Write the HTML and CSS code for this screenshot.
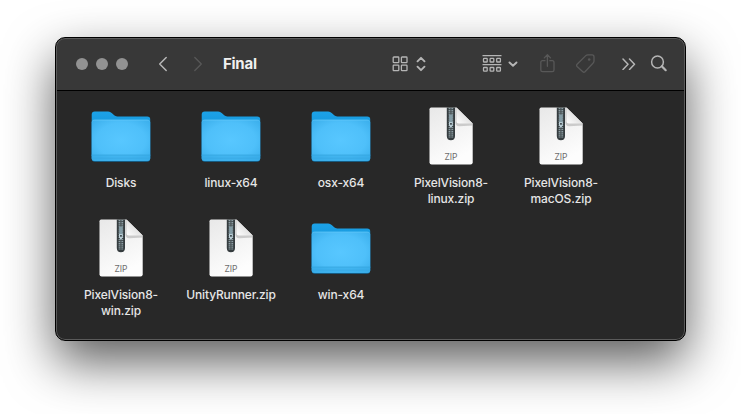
FILE: index.html
```html
<!DOCTYPE html>
<html lang="en">
<head>
<meta charset="utf-8">
<title>Final</title>
<link rel="stylesheet" href="styles.css">
</head>
<body>
<svg class="defs" width="0" height="0" aria-hidden="true">
  <defs>
    <linearGradient id="folderBack" x1="0" y1="0" x2="0" y2="1">
      <stop offset="0" stop-color="#1ca2e8"/><stop offset="1" stop-color="#0f85c4"/>
    </linearGradient>
    <radialGradient id="folderFront" cx=".5" cy=".5" r=".7">
      <stop offset="0" stop-color="#58c7ff"/><stop offset=".6" stop-color="#4fc0fa"/><stop offset="1" stop-color="#39adea"/>
    </radialGradient>
    <linearGradient id="paper" x1="0" y1="0" x2=".4" y2="1">
      <stop offset="0" stop-color="#e8e8e8"/><stop offset="1" stop-color="#fdfdfd"/>
    </linearGradient>
    <linearGradient id="fold" x1="0" y1="1" x2=".5" y2=".5">
      <stop offset="0" stop-color="#fff"/><stop offset="1" stop-color="#e4e4e4"/>
    </linearGradient>
    <symbol id="folder" viewBox="0 0 64 64">
      <path d="M2.700 52V10.500Q2.700 7.500 5.700 7.500H19.200Q21.200 7.500 22.700 9L25.200 11.300Q26.200 12.400 28.200 12.400H58.200Q61.200 12.400 61.200 15.200V52Z" fill="url(#folderBack)"/>
      <path d="M2.700 19Q2.700 16 5.700 16H58.200Q61.200 16 61.200 19V54.500Q61.200 57.700 58 57.700H6Q2.700 57.700 2.700 54.500Z" fill="#126c9f"/>
      <path d="M2.700 18.200Q2.700 15.700 5.700 15.700H58.200Q61.200 15.700 61.200 18.200V54Q61.200 57 58.200 57H5.700Q2.700 57 2.700 54Z" fill="url(#folderFront)"/>
      <path d="M3.200 17.200Q3.700 16.100 5.700 16.100H58.200Q60.200 16.100 60.700 17.200" fill="none" stroke="#6acbfb" stroke-width=".6"/>
      <path d="M2.700 51H61.200V54Q61.200 57 58.200 57H5.700Q2.700 57 2.700 54Z" fill="#35a9e5" opacity=".55"/>
      <path d="M2.700 51H61.200" stroke="#36a6e0" stroke-width=".8"/>
      <path d="M2.700 54.200H61.200" stroke="#36a6e0" stroke-width=".6"/>
    </symbol>
    <symbol id="zip" viewBox="0 0 64 64">
      <path d="M12.200 3.600H37.500L53.700 19.500V58.300Q53.700 60.500 51.500 60.500H12.700Q10.500 60.500 10.500 58.300V5.300Q10.500 3.600 12.200 3.600Z" fill="url(#paper)"/>
      <path d="M36.500 3.600V18.500Q36.500 22.300 40.300 22.300L53.700 21.500V19.500Z" fill="#aaa" opacity=".55"/>
      <path d="M37.500 3.600V17Q37.500 19.500 40 19.500H53.700Z" fill="url(#fold)"/>
      <path d="M27.800 3.600H36V32Q36 36.200 31.900 36.200Q27.800 36.200 27.800 32Z" fill="#353c3f"/>
      <path d="M31.900 4V34" stroke="#8c9da4" stroke-width="4.600" stroke-dasharray="1.300 .8"/>
      <path d="M31.900 4V12M31.900 23V34" stroke="#4a5458" stroke-width="1.200"/>
      <path d="M30 10.500H33.800L33.500 18.500H30.300Z" fill="#839ba4"/>
      <path d="M30 18H33.800V21.500L31.900 24L30 21.500Z" fill="#b9cdd5"/>
      <rect x="31.200" y="19" width="1.500" height="1.700" fill="#273034"/>
      <text class="zip-text" x="32" y="56" text-anchor="middle">ZIP</text>
    </symbol>
  </defs>
</svg>
<main class="window">
  <header class="toolbar">
    <div class="lights"><i></i><i></i><i></i></div>
    <svg class="icon back" width="10" height="16" viewBox="0 0 10 16"><path d="M8.200 1.500L1.700 8L8.200 14.500"/></svg>
    <svg class="icon forward dim" width="10" height="16" viewBox="0 0 10 16"><path d="M1.800 1.500L8.300 8L1.800 14.500"/></svg>
    <h1 class="title">Final</h1>
    <svg class="icon view" width="16" height="16" viewBox="0 0 16 16"><g class="fine"><rect x="1.200" y="1" width="5.600" height="5.600" rx=".7"/><rect x="9.400" y="1" width="5.600" height="5.600" rx=".7"/><rect x="1.200" y="9.100" width="5.600" height="5.600" rx=".7"/><rect x="9.400" y="9.100" width="5.600" height="5.600" rx=".7"/></g></svg>
    <svg class="icon updown bold" width="10" height="16" viewBox="0 0 10 16"><path d="M1.500 5.300L5 1.800L8.500 5.300M1.500 10.700L5 14.200L8.500 10.700"/></svg>
    <svg class="icon group" width="20" height="18" viewBox="0 0 20 18"><g class="fine"><path d="M1 .700H19M1 9.700H19"/><rect x="1.500" y="3.300" width="3.700" height="3.700" rx=".6"/><rect x="8.100" y="3.300" width="3.700" height="3.700" rx=".6"/><rect x="14.700" y="3.300" width="3.700" height="3.700" rx=".6"/><rect x="1.500" y="12.500" width="3.700" height="3.700" rx=".6"/><rect x="8.100" y="12.500" width="3.700" height="3.700" rx=".6"/><rect x="14.700" y="12.500" width="3.700" height="3.700" rx=".6"/></g></svg>
    <svg class="icon down bold" width="10" height="8" viewBox="0 0 10 8"><path d="M1.500 2.500L5 5.800L8.500 2.500"/></svg>
    <svg class="icon share dim" width="16" height="20" viewBox="0 0 16 20"><path d="M5 6.700H2.500Q.8 6.700 .8 8.400V16Q.8 17.700 2.500 17.700H12.300Q14 17.700 14 16V8.400Q14 6.700 12.300 6.700H9.800M7.400 12.300V1M4.300 3.900L7.400 .8L10.500 3.900"/></svg>
    <svg class="icon tag dim" width="20" height="20" viewBox="0 0 20 20"><path d="M1.100 10.300L9.800 1.600Q10.600 .8 11.800 .8H16Q18 .8 18 2.800V7Q18 8.200 17.200 9L9 17.700Q7.900 18.700 6.800 17.700L1.100 12.500Q.1 11.400 1.100 10.300Z"/><circle class="dot" cx="13.200" cy="5.500" r="1.300"/></svg>
    <svg class="icon more" width="14" height="12" viewBox="0 0 14 12"><path d="M1 1L6 6.200L1 11.400M7.500 1L12.500 6.200L7.500 11.400"/></svg>
    <svg class="icon search" width="18" height="18" viewBox="0 0 18 18"><circle cx="7.500" cy="7" r="5.900"/><path class="handle" d="M11.800 11.300L15.700 15.200"/></svg>
  </header>
  <section class="files">
    <figure><svg><use href="#folder"/></svg><figcaption>Disks</figcaption></figure>
    <figure><svg><use href="#folder"/></svg><figcaption>linux-x64</figcaption></figure>
    <figure><svg><use href="#folder"/></svg><figcaption>osx-x64</figcaption></figure>
    <figure><svg><use href="#zip"/></svg><figcaption>PixelVision8-<br>linux.zip</figcaption></figure>
    <figure><svg><use href="#zip"/></svg><figcaption>PixelVision8-<br>macOS.zip</figcaption></figure>
    <figure><svg><use href="#zip"/></svg><figcaption>PixelVision8-<br>win.zip</figcaption></figure>
    <figure><svg><use href="#zip"/></svg><figcaption>UnityRunner.zip</figcaption></figure>
    <figure><svg><use href="#folder"/></svg><figcaption>win-x64</figcaption></figure>
  </section>
</main>
</body>
</html>
```
FILE: styles.css
```css
* { box-sizing: border-box; }
html { height: 100%; overflow: hidden; }
body {
  margin: 0;
  height: 414px;
  padding: 37px 55px 0;
  overflow: hidden;
  background: #fff;
  font-family: Inter, "Liberation Sans", sans-serif;
}
.defs { display: block; }
.window {
  width: 631px;
  height: 304px;
  border: 1px solid #000;
  border-radius: 10px;
  overflow: hidden;
  background: linear-gradient(#383838 0 52px, #000 52px 53px, #282828 53px);
  box-shadow: inset 0 0 0 1px #5a5a5a, 0 21px 50px rgba(0, 0, 0, .64);
}
.toolbar { display: flex; align-items: center; height: 53px; padding: 0 0 1px 20px; }
.lights { display: flex; gap: 8px; }
.lights i { width: 12px; height: 12px; border-radius: 50%; background: #929292; }
.icon {
  flex: none;
  fill: none;
  stroke: #b5b5b5;
  stroke-width: 1.5;
  stroke-linecap: round;
  stroke-linejoin: round;
}
.dim { stroke: #585858; stroke-width: 1.3; }
.bold { stroke-width: 1.9; }
.fine { stroke-width: 1.3; }
.dot { fill: #585858; stroke: none; }
.handle { stroke-width: 2.2; }
.back { margin-left: 30px; }
.forward { margin-left: 25px; }
.title { width: 36px; margin: 0 0 0 20px; color: #f0f0f0; font-size: 15px; line-height: 18px; font-weight: 700; letter-spacing: -.25px; white-space: nowrap; }
.view { margin-left: 133px; }
.updown { margin-left: 8px; }
.group { margin-left: 56px; }
.down { margin-left: 6px; }
.share { margin-left: 22px; }
.tag { margin-left: 20px; }
.more { margin-left: 26px; }
.search { margin-left: 14px; }
.files {
  display: grid;
  grid-template-columns: repeat(5, 110px);
  grid-auto-rows: 112px;
  padding: 13px 0 0 10px;
}
figure { margin: 0; text-align: center; }
figure svg { display: block; width: 64px; height: 64px; margin: 0 auto 7px; }
figcaption { color: #e6e6e6; font-size: 12px; line-height: 16px; font-weight: 500; letter-spacing: -.14px; }
.zip-text { font-size: 8.5px; fill: #6c6c6c; }
```
